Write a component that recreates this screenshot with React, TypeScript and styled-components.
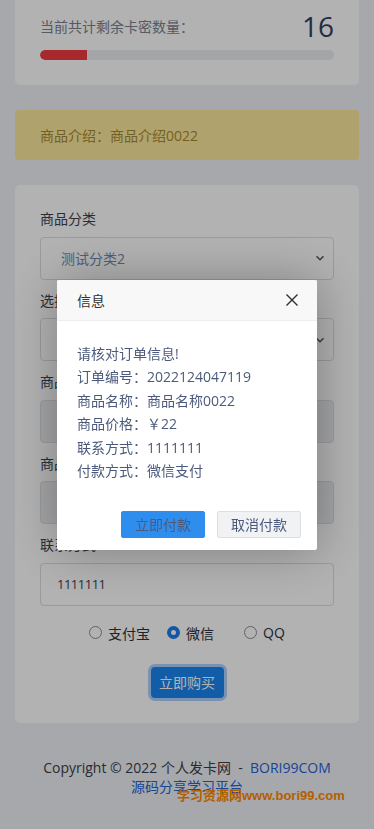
import styled, { createGlobalStyle } from 'styled-components';

const GlobalStyle = createGlobalStyle`
  html, body {
    margin: 0;
    padding: 0;
    background: #f0f1f6;
  }
  body {
    font-family: "Open Sans", "Noto Sans CJK SC", sans-serif;
    font-size: 14px;
    color: #3a3f4b;
  }
`;

const Page = styled.div`
  position: relative;
  min-height: 829px;
  overflow: hidden;
  padding: 0 15px;
  display: flex;
  flex-direction: column;
  gap: 25px;
`;

const Card = styled.section`
  background: #ffffff;
  border-radius: 5px;
  padding: 25px;
`;

const StockCard = styled(Card)`
  margin-top: -12px;
  padding-top: 20px;
`;

const StockRow = styled.div`
  display: flex;
  align-items: center;
  justify-content: space-between;
  height: 36px;
`;

const StockLabel = styled.span`
  color: #7a8190;
  font-size: 14px;
`;

const StockNumber = styled.span`
  font-size: 28px;
  color: #34405e;
  line-height: 1;
`;

const Track = styled.div`
  margin-top: 6px;
  height: 10px;
  border-radius: 5px;
  background: #ebecf0;
  overflow: hidden;
`;

const Fill = styled.div`
  height: 100%;
  background: #ef3a41;
  border-radius: 5px 0 0 5px;
`;

const Alert = styled.div`
  background: #fde89d;
  color: #a58b32;
  border-radius: 4px;
  height: 50px;
  padding: 0 25px;
  display: flex;
  align-items: center;
  font-size: 14px;
`;

const FormCard = styled(Card)`
  display: flex;
  flex-direction: column;
`;

const Group = styled.div`
  display: flex;
  flex-direction: column;
  margin-bottom: 12px;
`;

const Label = styled.label`
  font-size: 14px;
  line-height: 18px;
  color: #3c4350;
  margin-bottom: 8.5px;
`;

const SelectWrap = styled.div`
  position: relative;
  height: 43px;
  border: 1px solid #dcdde1;
  border-radius: 4px;
  background: #ffffff;
  display: flex;
  align-items: center;
  padding: 0 20px;
  box-sizing: border-box;
  color: #7288b0;
  font-size: 14px;
`;

const Chevron = styled.svg`
  position: absolute;
  right: 8px;
  top: 50%;
  margin-top: -5px;
`;

const Field = styled.div<{ $disabled?: boolean }>`
  height: 43px;
  border: 1px solid #dcdde1;
  border-radius: 4px;
  background: ${(p) => (p.$disabled ? '#ebecef' : '#ffffff')};
  display: flex;
  align-items: center;
  padding: 0 16px;
  box-sizing: border-box;
  color: #3c4350;
  font-size: 13px;
  letter-spacing: -0.5px;
`;

const Radios = styled.div`
  display: flex;
  justify-content: center;
  align-items: center;
  gap: 17px;
  margin-top: 5px;
  height: 20px;
`;

const RadioItem = styled.div<{ $extra?: number }>`
  display: flex;
  align-items: center;
  gap: 6px;
  padding-right: ${(p) => p.$extra ?? 0}px;
  font-size: 14px;
  color: #2c3140;
`;

const RadioDot = styled.span<{ $on?: boolean }>`
  width: 13px;
  height: 13px;
  box-sizing: border-box;
  border-radius: 50%;
  border: ${(p) => (p.$on ? '4px solid #1b7bf0' : '1px solid #8a8d94')};
  background: #ffffff;
`;

const BuyRow = styled.div`
  display: flex;
  justify-content: center;
  margin-top: 24px;
`;

const BuyButton = styled.button`
  width: 73px;
  height: 31px;
  border: none;
  border-radius: 4px;
  background: #1a86ef;
  color: #ffffff;
  font-family: inherit;
  font-size: 14px;
  box-shadow: 0 0 0 3px rgba(110, 170, 250, 0.55);
`;

const Footer = styled.footer`
  margin-top: 10px;
  text-align: center;
  font-size: 14px;
  line-height: 19px;
  color: #3b3e46;
  padding: 0 8px;
`;

const FooterLink = styled.a`
  color: #2563d8;
  text-decoration: none;
`;

const NoWrap = styled.span`
  white-space: nowrap;
`;

const Watermark = styled.div`
  position: absolute;
  left: 177px;
  top: 785px;
  white-space: nowrap;
  color: #ff8a00;
  font-weight: 700;
  font-size: 13px;
  font-family: "Liberation Sans", "Noto Sans CJK SC", sans-serif;
`;

const Overlay = styled.div`
  position: fixed;
  inset: 0;
  background: rgba(0, 0, 0, 0.3);
  display: flex;
  align-items: center;
  justify-content: center;
`;

const Dialog = styled.div`
  width: 260px;
  background: #ffffff;
  border-radius: 2px;
  box-shadow: 1px 1px 50px rgba(0, 0, 0, 0.3);
  overflow: hidden;
`;

const DialogHead = styled.div`
  height: 41px;
  box-sizing: border-box;
  background: #f8f8f8;
  border-bottom: 1px solid #eeeeee;
  display: flex;
  align-items: center;
  justify-content: space-between;
  padding: 0 18px 0 20px;
  font-size: 14px;
  color: #333333;
`;

const DialogBody = styled.div`
  padding: 21px 20px 0;
  font-size: 14px;
  line-height: 23.5px;
  color: #4b5a7c;
`;

const DialogActions = styled.div`
  display: flex;
  justify-content: flex-end;
  gap: 12px;
  padding: 28px 16px 12px;
`;

const DialogButton = styled.button<{ $primary?: boolean }>`
  width: 84px;
  height: 27px;
  border-radius: 2px;
  border: 1px solid ${(p) => (p.$primary ? '#2e8ded' : '#dedede')};
  background: ${(p) => (p.$primary ? '#2e8ded' : '#f1f2f4')};
  color: #4b5a7c;
  font-family: inherit;
  font-size: 14px;
  padding: 0;
`;

const lines = [
  '请核对订单信息!',
  '订单编号：2022124047119',
  '商品名称：商品名称0022',
  '商品价格：￥22',
  '联系方式：1111111',
  '付款方式：微信支付',
];

const ChevronIcon = () => (
  <Chevron width="10" height="10" viewBox="0 0 10 10">
    <path d="M1.5 3.2 L5 6.7 L8.5 3.2" fill="none" stroke="#555a63" strokeWidth="1.6" />
  </Chevron>
);

export default function App() {
  const stock = 16;
  return (
    <>
      <GlobalStyle />
      <Page>
        <StockCard>
          <StockRow>
            <StockLabel>当前共计剩余卡密数量：</StockLabel>
            <StockNumber>{stock}</StockNumber>
          </StockRow>
          <Track>
            <Fill style={{ width: `${stock}%` }} />
          </Track>
        </StockCard>

        <Alert>商品介绍：商品介绍0022</Alert>

        <FormCard>
          <Group>
            <Label>商品分类</Label>
            <SelectWrap>
              测试分类2
              <ChevronIcon />
            </SelectWrap>
          </Group>
          <Group>
            <Label>选择商品</Label>
            <SelectWrap>
              <ChevronIcon />
            </SelectWrap>
          </Group>
          <Group>
            <Label>商品名称</Label>
            <Field $disabled />
          </Group>
          <Group>
            <Label>商品价格</Label>
            <Field $disabled />
          </Group>
          <Group>
            <Label>联系方式</Label>
            <Field>1111111</Field>
          </Group>
          <Radios>
            <RadioItem>
              <RadioDot />
              支付宝
            </RadioItem>
            <RadioItem $extra={13}>
              <RadioDot $on />
              微信
            </RadioItem>
            <RadioItem>
              <RadioDot />
              QQ
            </RadioItem>
          </Radios>
          <BuyRow>
            <BuyButton>立即购买</BuyButton>
          </BuyRow>
        </FormCard>

        <Footer>
          <NoWrap>Copyright © 2022 个人发卡网</NoWrap> &nbsp;-&nbsp;{' '}
          <FooterLink>
            BORI99COM <NoWrap>源码分享学习平台</NoWrap>
          </FooterLink>
        </Footer>
        <Watermark>学习资源网www.bori99.com</Watermark>
      </Page>

      <Overlay>
        <Dialog>
          <DialogHead>
            信息
            <svg width="14" height="14" viewBox="0 0 14 14">
              <path d="M1.5 1.5 L12.5 12.5 M12.5 1.5 L1.5 12.5" stroke="#2f2f2f" strokeWidth="1.4" />
            </svg>
          </DialogHead>
          <DialogBody>
            {lines.map((l) => (
              <div key={l}>{l}</div>
            ))}
          </DialogBody>
          <DialogActions>
            <DialogButton $primary>立即付款</DialogButton>
            <DialogButton>取消付款</DialogButton>
          </DialogActions>
        </Dialog>
      </Overlay>
    </>
  );
}
